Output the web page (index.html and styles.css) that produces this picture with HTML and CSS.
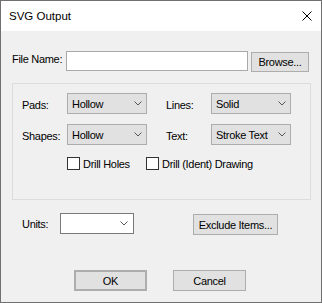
FILE: index.html
```html
<!DOCTYPE html>
<html lang="en">
<head>
    <meta charset="UTF-8">
    <title>SVG Output</title>
    <link rel="stylesheet" href="styles.css">
</head>
<body>
<div class="dialog">
    <div class="titlebar">
        <span class="title">SVG Output</span>
        <svg class="close" width="10" height="10" viewBox="0 0 10 10">
            <path d="M0.5 0.5 L9.5 9.5 M9.5 0.5 L0.5 9.5" stroke="#000" stroke-width="1" fill="none"/>
        </svg>
    </div>
    <div class="content">
        <div class="file-row">
            <span class="file-label">File Name:</span>
            <div class="textbox"></div>
            <button class="btn btn-browse">Browse...</button>
        </div>

        <div class="group">
            <div class="opt-row">
                <span class="opt-label">Pads:</span>
                <div class="combo"><span>Hollow</span><svg class="chev" width="8" height="5" viewBox="0 0 8 5"><path d="M0.5 0.5 L4 4 L7.5 0.5" stroke="#555" fill="none"/></svg></div>
                <span class="opt-label opt-label-right">Lines:</span>
                <div class="combo"><span>Solid</span><svg class="chev" width="8" height="5" viewBox="0 0 8 5"><path d="M0.5 0.5 L4 4 L7.5 0.5" stroke="#555" fill="none"/></svg></div>
            </div>
            <div class="opt-row opt-row-2">
                <span class="opt-label">Shapes:</span>
                <div class="combo"><span>Hollow</span><svg class="chev" width="8" height="5" viewBox="0 0 8 5"><path d="M0.5 0.5 L4 4 L7.5 0.5" stroke="#555" fill="none"/></svg></div>
                <span class="opt-label opt-label-right">Text:</span>
                <div class="combo"><span>Stroke Text</span><svg class="chev" width="8" height="5" viewBox="0 0 8 5"><path d="M0.5 0.5 L4 4 L7.5 0.5" stroke="#555" fill="none"/></svg></div>
            </div>
            <div class="check-row">
                <span class="check check-first"><span class="box"></span>Drill Holes</span>
                <span class="check"><span class="box"></span>Drill (Ident) Drawing</span>
            </div>
        </div>

        <div class="units-row">
            <span class="units-label">Units:</span>
            <div class="combo combo-units"><span></span><svg class="chev" width="8" height="5" viewBox="0 0 8 5"><path d="M0.5 0.5 L4 4 L7.5 0.5" stroke="#555" fill="none"/></svg></div>
            <button class="btn btn-exclude">Exclude Items...</button>
        </div>

        <div class="action-row">
            <button class="btn btn-action btn-default">OK</button>
            <button class="btn btn-action btn-cancel">Cancel</button>
        </div>
    </div>
</div>
</body>
</html>
```

FILE: styles.css
```css
* {
    margin: 0;
    padding: 0;
    box-sizing: border-box;
}

body {
    width: 322px;
    height: 303px;
    overflow: hidden;
    font-family: "Liberation Sans", Arial, sans-serif;
    font-size: 11px;
    letter-spacing: -0.3px;
    white-space: nowrap;
    color: #000;
}

.dialog {
    width: 322px;
    height: 303px;
    border: 1px solid #707070;
    background-color: #f0f0f0;
    display: flex;
    flex-direction: column;
}

.titlebar {
    height: 30px;
    background-color: #fff;
    display: flex;
    align-items: center;
    justify-content: space-between;
    padding: 0 9px 0 8px;
}

.title {
    font-size: 11.5px;
    letter-spacing: 0;
}

.close {
    display: block;
}

.content {
    flex: 1;
    padding: 20px 10px 0 11px;
}

/* file name row */
.file-row {
    display: flex;
    align-items: flex-start;
    height: 21px;
}

.file-label {
    width: 54px;
    line-height: 17px;
}

.textbox {
    width: 182px;
    height: 20px;
    background-color: #fff;
    border: 1px solid #a9a9a9;
}

.btn {
    font-family: inherit;
    font-size: inherit;
    letter-spacing: inherit;
    color: #000;
    background-color: #e1e1e1;
    border: 1px solid #adadad;
    display: flex;
    align-items: center;
    justify-content: center;
}

.btn-browse {
    width: 58px;
    height: 20px;
    margin: 1px 0 0 3px;
}

/* options group */
.group {
    width: 299px;
    height: 117px;
    margin-top: 11px;
    border: 1px solid #dcdcdc;
    padding: 9px 0 0 9px;
}

.opt-row {
    display: flex;
    align-items: center;
    height: 21px;
}

.opt-row-2 {
    margin-top: 10px;
}

.opt-label {
    width: 45px;
    padding-top: 2px;
}

.opt-label-right {
    margin-left: 19px;
}

.combo {
    width: 80px;
    height: 21px;
    background-color: #e1e1e1;
    border: 1px solid #adadad;
    display: flex;
    align-items: center;
    justify-content: space-between;
    padding: 0 4px 0 4px;
}

.chev {
    display: block;
}

.check-row {
    display: flex;
    align-items: center;
    margin: 12px 0 0 45px;
    height: 13px;
}

.check {
    display: flex;
    align-items: center;
}

.check-first {
    width: 79px;
}

.box {
    width: 13px;
    height: 13px;
    background-color: #fff;
    border: 1px solid #333;
    margin-right: 3px;
}

/* units row */
.units-row {
    display: flex;
    align-items: flex-start;
    margin-top: 13px;
    padding-left: 10px;
}

.units-label {
    width: 38px;
    line-height: 23px;
}

.combo-units {
    width: 74px;
    background-color: #fff;
    border-color: #7a7a7a;
    padding-right: 5px;
}

.btn-exclude {
    width: 85px;
    height: 21px;
    margin: 1px 0 0 59px;
}

/* ok / cancel */
.action-row {
    display: flex;
    margin-top: 34px;
    padding-left: 62px;
}

.btn-action {
    width: 73px;
    height: 21px;
}

.btn-default {
    border-width: 2px;
}

.btn-cancel {
    margin-left: 26px;
}
```
